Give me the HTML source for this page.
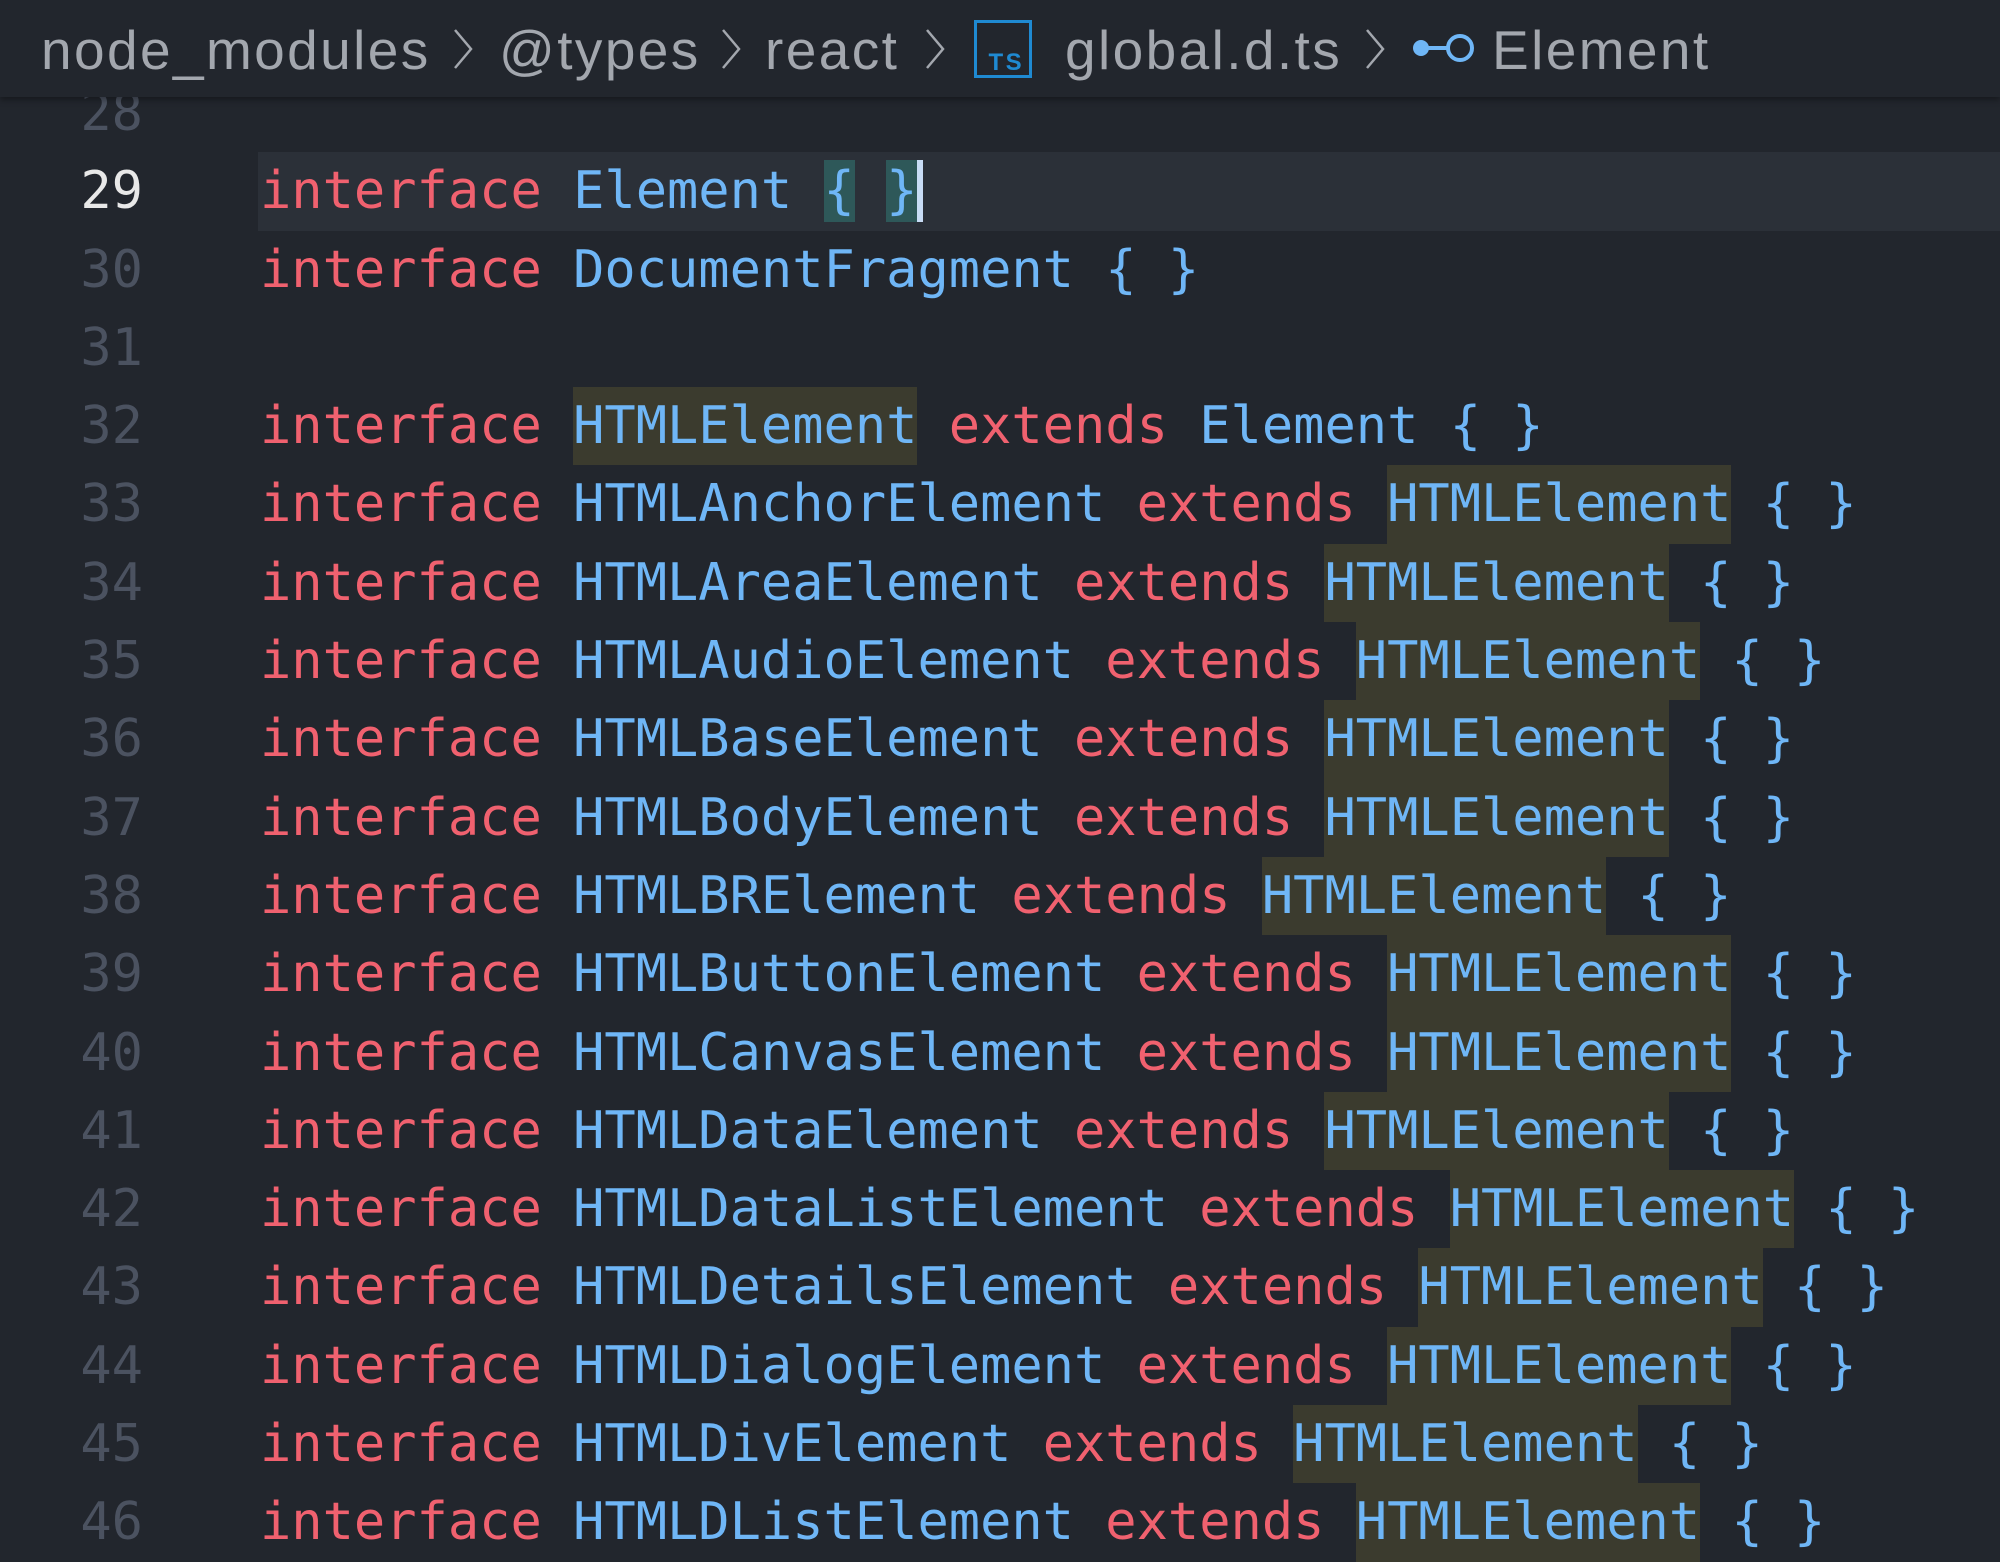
<!DOCTYPE html>
<html><head><meta charset="utf-8"><style>
html,body{margin:0;padding:0;width:2000px;height:1548px;overflow:hidden;background:#22262d;}
.bc{position:absolute;left:0;top:0;width:2000px;height:97px;background:#22262d;box-shadow:0 3px 6px rgba(0,0,0,0.35);z-index:5;font-family:"Liberation Sans",sans-serif;font-size:55px;letter-spacing:2.4px;color:#a3a7ae;}
.bc span{position:absolute;top:10px;line-height:80px;white-space:nowrap;}
.bc svg{position:absolute;}
.ed{position:absolute;left:0;top:74px;width:2000px;font-family:"DejaVu Sans Mono","Liberation Mono",monospace;font-size:52px;}
.ln{position:relative;height:78.3px;line-height:78.3px;white-space:pre;}
.num{position:absolute;left:0;width:143px;text-align:right;color:#4b5260;}
.code{position:absolute;left:260px;}
.cur{background:#2b3038;}
.k{color:#f0616f;}
.t{color:#6fb6f6;}
.h{background:#3b3b2e;display:inline-block;height:78.3px;}
.b{background:#2e5859;display:inline-block;height:62px;line-height:62px;vertical-align:top;margin-top:8px;}
.c{display:inline-block;width:6px;height:62px;background:#c8dcf5;vertical-align:top;margin-top:8px;}
</style></head><body>
<div class="bc">
<span style="left:41px">node_modules</span>
<svg style="left:452px;top:28px" width="22" height="42" viewBox="0 0 22 42"><polyline points="3,2 19,21 3,40" fill="none" stroke="#a3a7ae" stroke-width="2.5"/></svg>
<span style="left:499px">@types</span>
<svg style="left:720px;top:28px" width="22" height="42" viewBox="0 0 22 42"><polyline points="3,2 19,21 3,40" fill="none" stroke="#a3a7ae" stroke-width="2.5"/></svg>
<span style="left:765px">react</span>
<svg style="left:924px;top:28px" width="22" height="42" viewBox="0 0 22 42"><polyline points="3,2 19,21 3,40" fill="none" stroke="#a3a7ae" stroke-width="2.5"/></svg>
<svg style="left:974px;top:20px" width="58" height="58" viewBox="0 0 58 58"><rect x="1.5" y="1.5" width="55" height="55" fill="none" stroke="#1f8ad2" stroke-width="3"/><text x="50" y="50" text-anchor="end" font-family="Liberation Sans,sans-serif" font-weight="bold" font-size="24" fill="#1f8ad2">TS</text></svg>
<span style="left:1065px">global.d.ts</span>
<svg style="left:1364px;top:28px" width="22" height="42" viewBox="0 0 22 42"><polyline points="3,2 19,21 3,40" fill="none" stroke="#a3a7ae" stroke-width="2.5"/></svg>
<svg style="left:1410px;top:30px" width="68" height="36" viewBox="0 0 68 36"><circle cx="11" cy="18" r="8" fill="#6fb6f6"/><line x1="14" y1="18" x2="38" y2="18" stroke="#6fb6f6" stroke-width="4"/><circle cx="50" cy="18" r="12" fill="none" stroke="#6fb6f6" stroke-width="4"/></svg>
<span style="left:1492px">Element</span>
</div>
<div class="ed">
<div class="ln"><span class="num">28</span></div>
<div class="ln"><span class="num" style="color:#e8e8e8">29</span><span class="code cur" style="left:258px;width:1742px;height:78.3px"></span><span class="code"><span class="k">interface</span> <span class="t">Element</span> <span class="t b">{</span> <span class="t b">}</span><span class="c"></span></span></div>
<div class="ln"><span class="num">30</span><span class="code"><span class="k">interface</span> <span class="t">DocumentFragment { }</span></span></div>
<div class="ln"><span class="num">31</span></div>
<div class="ln"><span class="num">32</span><span class="code"><span class="k">interface</span> <span class="t h">HTMLElement</span> <span class="k">extends</span> <span class="t">Element { }</span></span></div>
<div class="ln"><span class="num">33</span><span class="code"><span class="k">interface</span> <span class="t">HTMLAnchorElement</span> <span class="k">extends</span> <span class="t h">HTMLElement</span><span class="t"> { }</span></span></div>
<div class="ln"><span class="num">34</span><span class="code"><span class="k">interface</span> <span class="t">HTMLAreaElement</span> <span class="k">extends</span> <span class="t h">HTMLElement</span><span class="t"> { }</span></span></div>
<div class="ln"><span class="num">35</span><span class="code"><span class="k">interface</span> <span class="t">HTMLAudioElement</span> <span class="k">extends</span> <span class="t h">HTMLElement</span><span class="t"> { }</span></span></div>
<div class="ln"><span class="num">36</span><span class="code"><span class="k">interface</span> <span class="t">HTMLBaseElement</span> <span class="k">extends</span> <span class="t h">HTMLElement</span><span class="t"> { }</span></span></div>
<div class="ln"><span class="num">37</span><span class="code"><span class="k">interface</span> <span class="t">HTMLBodyElement</span> <span class="k">extends</span> <span class="t h">HTMLElement</span><span class="t"> { }</span></span></div>
<div class="ln"><span class="num">38</span><span class="code"><span class="k">interface</span> <span class="t">HTMLBRElement</span> <span class="k">extends</span> <span class="t h">HTMLElement</span><span class="t"> { }</span></span></div>
<div class="ln"><span class="num">39</span><span class="code"><span class="k">interface</span> <span class="t">HTMLButtonElement</span> <span class="k">extends</span> <span class="t h">HTMLElement</span><span class="t"> { }</span></span></div>
<div class="ln"><span class="num">40</span><span class="code"><span class="k">interface</span> <span class="t">HTMLCanvasElement</span> <span class="k">extends</span> <span class="t h">HTMLElement</span><span class="t"> { }</span></span></div>
<div class="ln"><span class="num">41</span><span class="code"><span class="k">interface</span> <span class="t">HTMLDataElement</span> <span class="k">extends</span> <span class="t h">HTMLElement</span><span class="t"> { }</span></span></div>
<div class="ln"><span class="num">42</span><span class="code"><span class="k">interface</span> <span class="t">HTMLDataListElement</span> <span class="k">extends</span> <span class="t h">HTMLElement</span><span class="t"> { }</span></span></div>
<div class="ln"><span class="num">43</span><span class="code"><span class="k">interface</span> <span class="t">HTMLDetailsElement</span> <span class="k">extends</span> <span class="t h">HTMLElement</span><span class="t"> { }</span></span></div>
<div class="ln"><span class="num">44</span><span class="code"><span class="k">interface</span> <span class="t">HTMLDialogElement</span> <span class="k">extends</span> <span class="t h">HTMLElement</span><span class="t"> { }</span></span></div>
<div class="ln"><span class="num">45</span><span class="code"><span class="k">interface</span> <span class="t">HTMLDivElement</span> <span class="k">extends</span> <span class="t h">HTMLElement</span><span class="t"> { }</span></span></div>
<div class="ln"><span class="num">46</span><span class="code"><span class="k">interface</span> <span class="t">HTMLDListElement</span> <span class="k">extends</span> <span class="t h">HTMLElement</span><span class="t"> { }</span></span></div>
</div>
</body></html>
